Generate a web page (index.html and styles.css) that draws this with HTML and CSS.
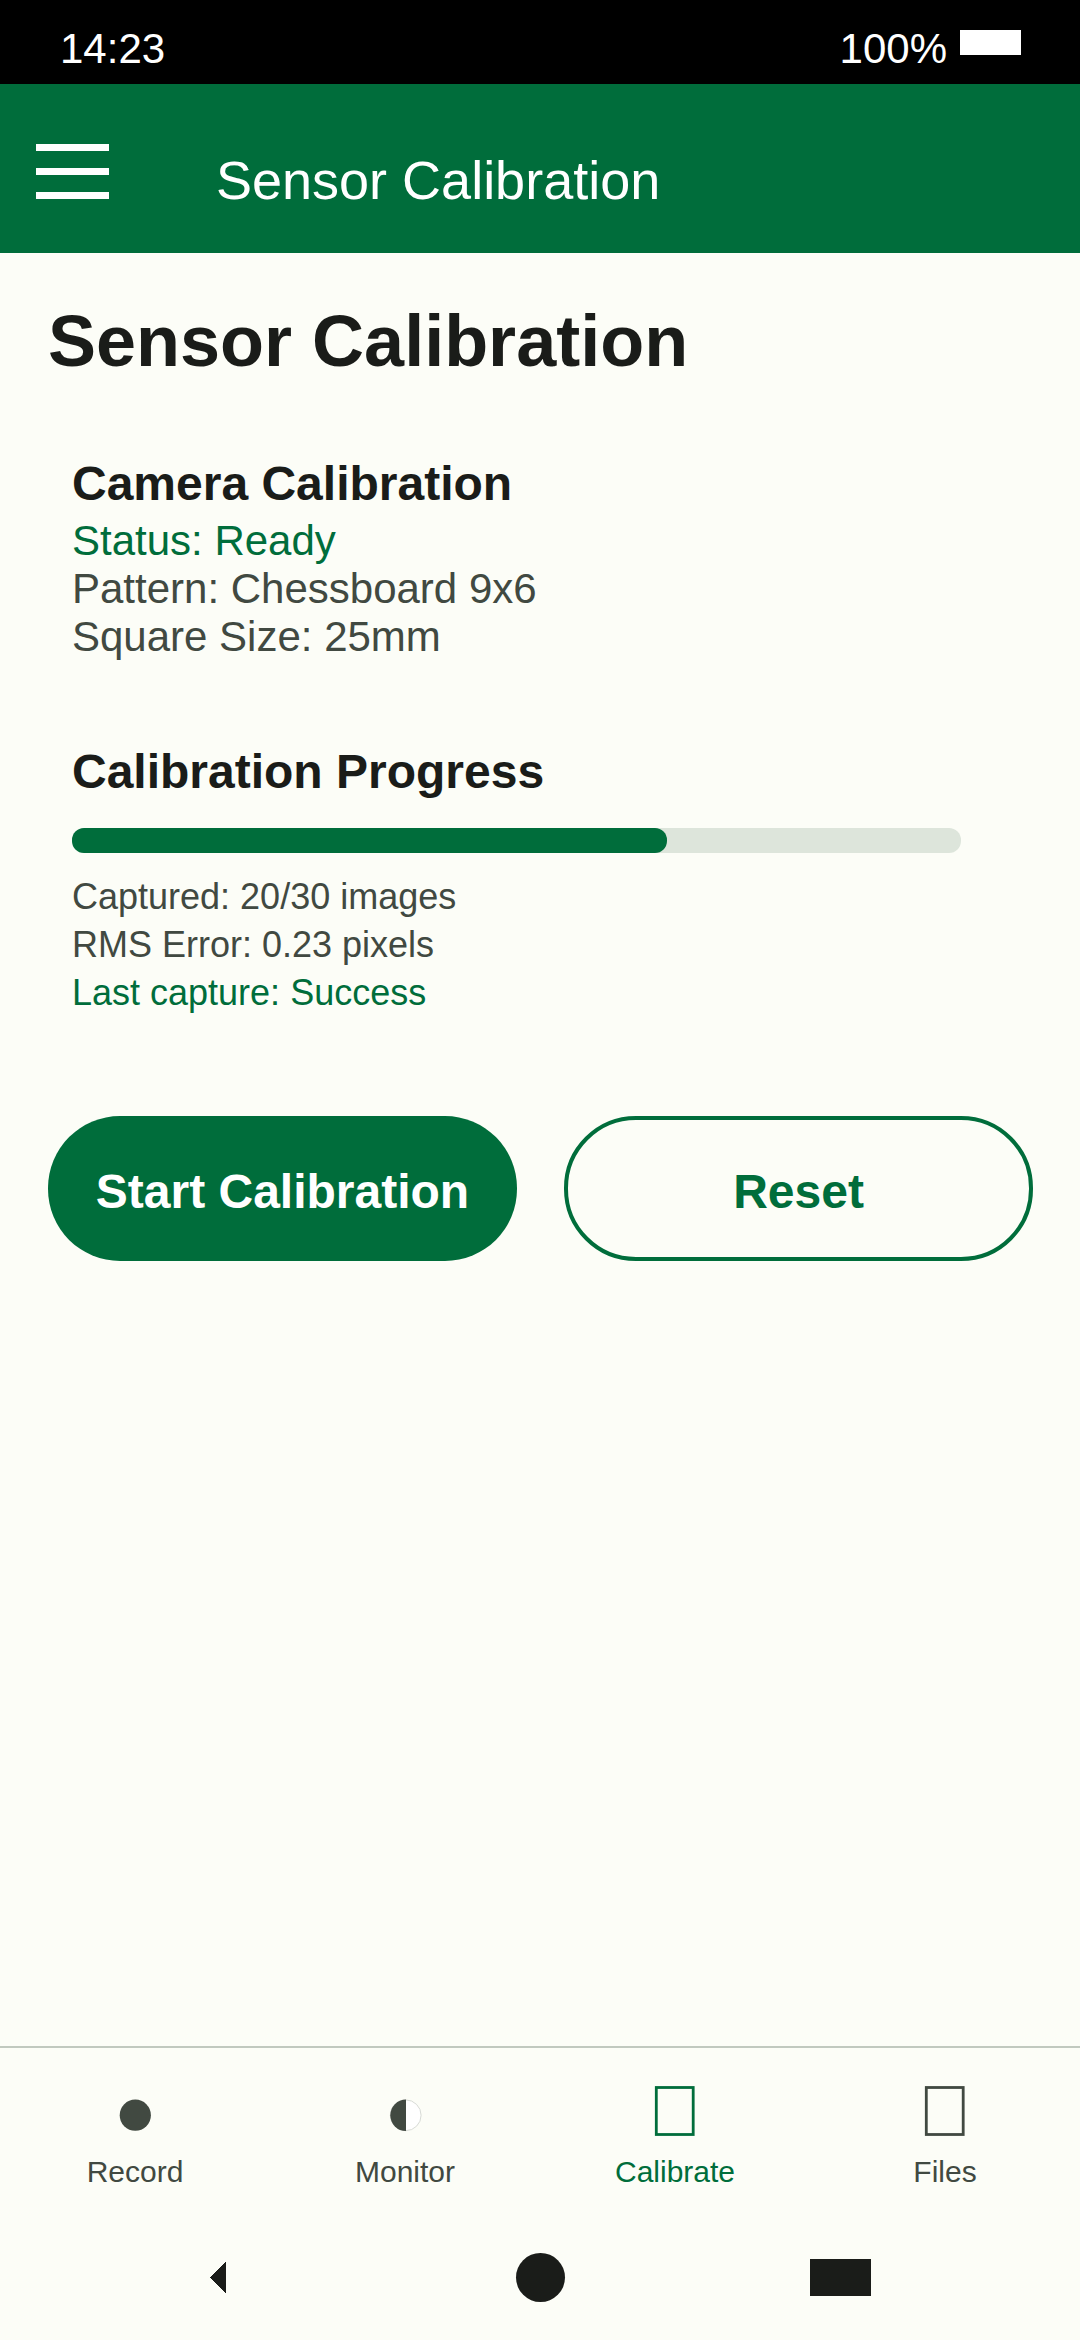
FILE: index.html
```html
<!DOCTYPE html>
<html lang="en">
<head>
<meta charset="utf-8">
<title>Sensor Calibration</title>
<link rel="stylesheet" href="styles.css">
</head>
<body>
<div class="screen">
  <div class="status-bar">
    <span>14:23</span>
    <div class="status-right"><span>100%</span><i class="battery"></i></div>
  </div>
  <header class="app-bar">
    <div class="menu"><i></i><i></i><i></i></div>
    <span class="app-title">Sensor Calibration</span>
  </header>
  <main class="content">
    <h1>Sensor Calibration</h1>
    <section class="panel camera">
      <h2>Camera Calibration</h2>
      <div class="details">
        <p class="ok">Status: Ready</p>
        <p>Pattern: Chessboard 9x6</p>
        <p>Square Size: 25mm</p>
      </div>
    </section>
    <section class="panel progress">
      <h2>Calibration Progress</h2>
      <div class="track"><div class="fill" style="width: 595px"></div></div>
      <div class="stats">
        <p>Captured: 20/30 images</p>
        <p>RMS Error: 0.23 pixels</p>
        <p class="ok">Last capture: Success</p>
      </div>
    </section>
    <div class="actions">
      <button class="btn primary">Start Calibration</button>
      <button class="btn outline">Reset</button>
    </div>
  </main>
  <nav class="tabs">
    <a class="tab">
      <svg width="42" height="50" viewBox="0 0 42 50"><circle cx="21.3" cy="29.2" r="15.6" fill="currentColor"/></svg>
      <span>Record</span>
    </a>
    <a class="tab">
      <svg width="42" height="50" viewBox="0 0 42 50"><circle cx="21.7" cy="29.3" r="15.4" fill="#fff" stroke="#d3d6d0" stroke-width="0.9"/><path d="M22 13.6A15.7 15.7 0 0 0 22 45Z" fill="currentColor"/></svg>
      <span>Monitor</span>
    </a>
    <a class="tab active">
      <svg width="42" height="50" viewBox="0 0 42 50"><rect x="2.3" y="1.5" width="36.9" height="47" fill="none" stroke="currentColor" stroke-width="2.8"/></svg>
      <span>Calibrate</span>
    </a>
    <a class="tab">
      <svg width="42" height="50" viewBox="0 0 42 50"><rect x="2.3" y="1.5" width="36.9" height="47" fill="none" stroke="currentColor" stroke-width="2.8"/></svg>
      <span>Files</span>
    </a>
  </nav>
  <div class="system-bar">
    <svg class="back" width="16" height="31" viewBox="0 0 16 31" shape-rendering="crispEdges"><path d="M0 15.5L16 -0.5V31.5Z" fill="currentColor"/></svg>
    <i class="home"></i>
    <i class="recent"></i>
  </div>
</div>
</body>
</html>
```
FILE: styles.css
```css
* { box-sizing: border-box; margin: 0; padding: 0; }
body { background: #fcfdf7; }
.screen {
  width: 1080px; height: 2340px; overflow: hidden;
  display: flex; flex-direction: column;
  font-family: "Liberation Sans", Arial, sans-serif;
  color: #1a1c19; background: #fcfdf7;
}
.status-bar {
  height: 84px; padding: 25px 59px 0 60px;
  display: flex; justify-content: space-between; align-items: flex-start;
  background: #000; color: #fff; font-size: 42px; line-height: 47px;
}
.status-right { display: flex; gap: 13px; }
.battery { width: 61px; height: 25px; margin-top: 5px; background: #fff; }
.app-bar {
  height: 169px; padding: 60px 36px 0;
  display: flex; align-items: flex-start; gap: 107px;
  background: #006d3b; color: #fff;
}
.menu { width: 73px; display: flex; flex-direction: column; gap: 17px; }
.menu i { height: 7px; background: #fff; }
.app-title { margin-top: 6px; font-size: 54px; line-height: 60px; }
.content { flex: 1; padding: 48px 47px 0 48px; }
h1 { font-size: 72px; line-height: 80px; font-weight: bold; }
h2 { font-size: 48px; line-height: 53px; font-weight: bold; }
.panel { padding: 0 24px; }
.camera { margin-top: 76px; }
.progress { margin-top: 84px; }
.details { margin-top: 7px; font-size: 42px; line-height: 48px; color: #414941; }
.ok { color: #006d3b; }
.track { width: 889px; height: 25px; margin-top: 30px; border-radius: 12px; background: #dde5db; }
.fill { height: 100%; border-radius: 12px; background: #006d3b; }
.stats { margin-top: 20px; font-size: 36px; line-height: 48px; color: #414941; }
.actions { display: flex; gap: 47px; margin-top: 99px; }
.btn {
  width: 469px; height: 145px; padding-top: 6px; border: 0; border-radius: 72px;
  font: bold 48px/53px "Liberation Sans", Arial, sans-serif;
}
.primary { background: #006d3b; color: #fff; }
.outline { background: transparent; color: #006d3b; border: 4px solid #006d3b; }
.tabs {
  height: 168px; padding-top: 38px; border-top: 2px solid #c1c9bf;
  display: grid; grid-template-columns: repeat(4, 1fr);
}
.tab {
  display: flex; flex-direction: column; align-items: center; gap: 19px;
  color: #414941; font-size: 30px; line-height: 33px;
}
.tab.active { color: #006d3b; }
.system-bar {
  height: 126px; padding: 1px 209px 0 210px;
  display: flex; align-items: center; justify-content: space-between;
}
.system-bar .home { width: 49px; height: 49px; border-radius: 50%; background: #1a1c19; margin-left: 45px; }
.system-bar .recent { width: 61px; height: 37px; background: #1a1c19; }
```
